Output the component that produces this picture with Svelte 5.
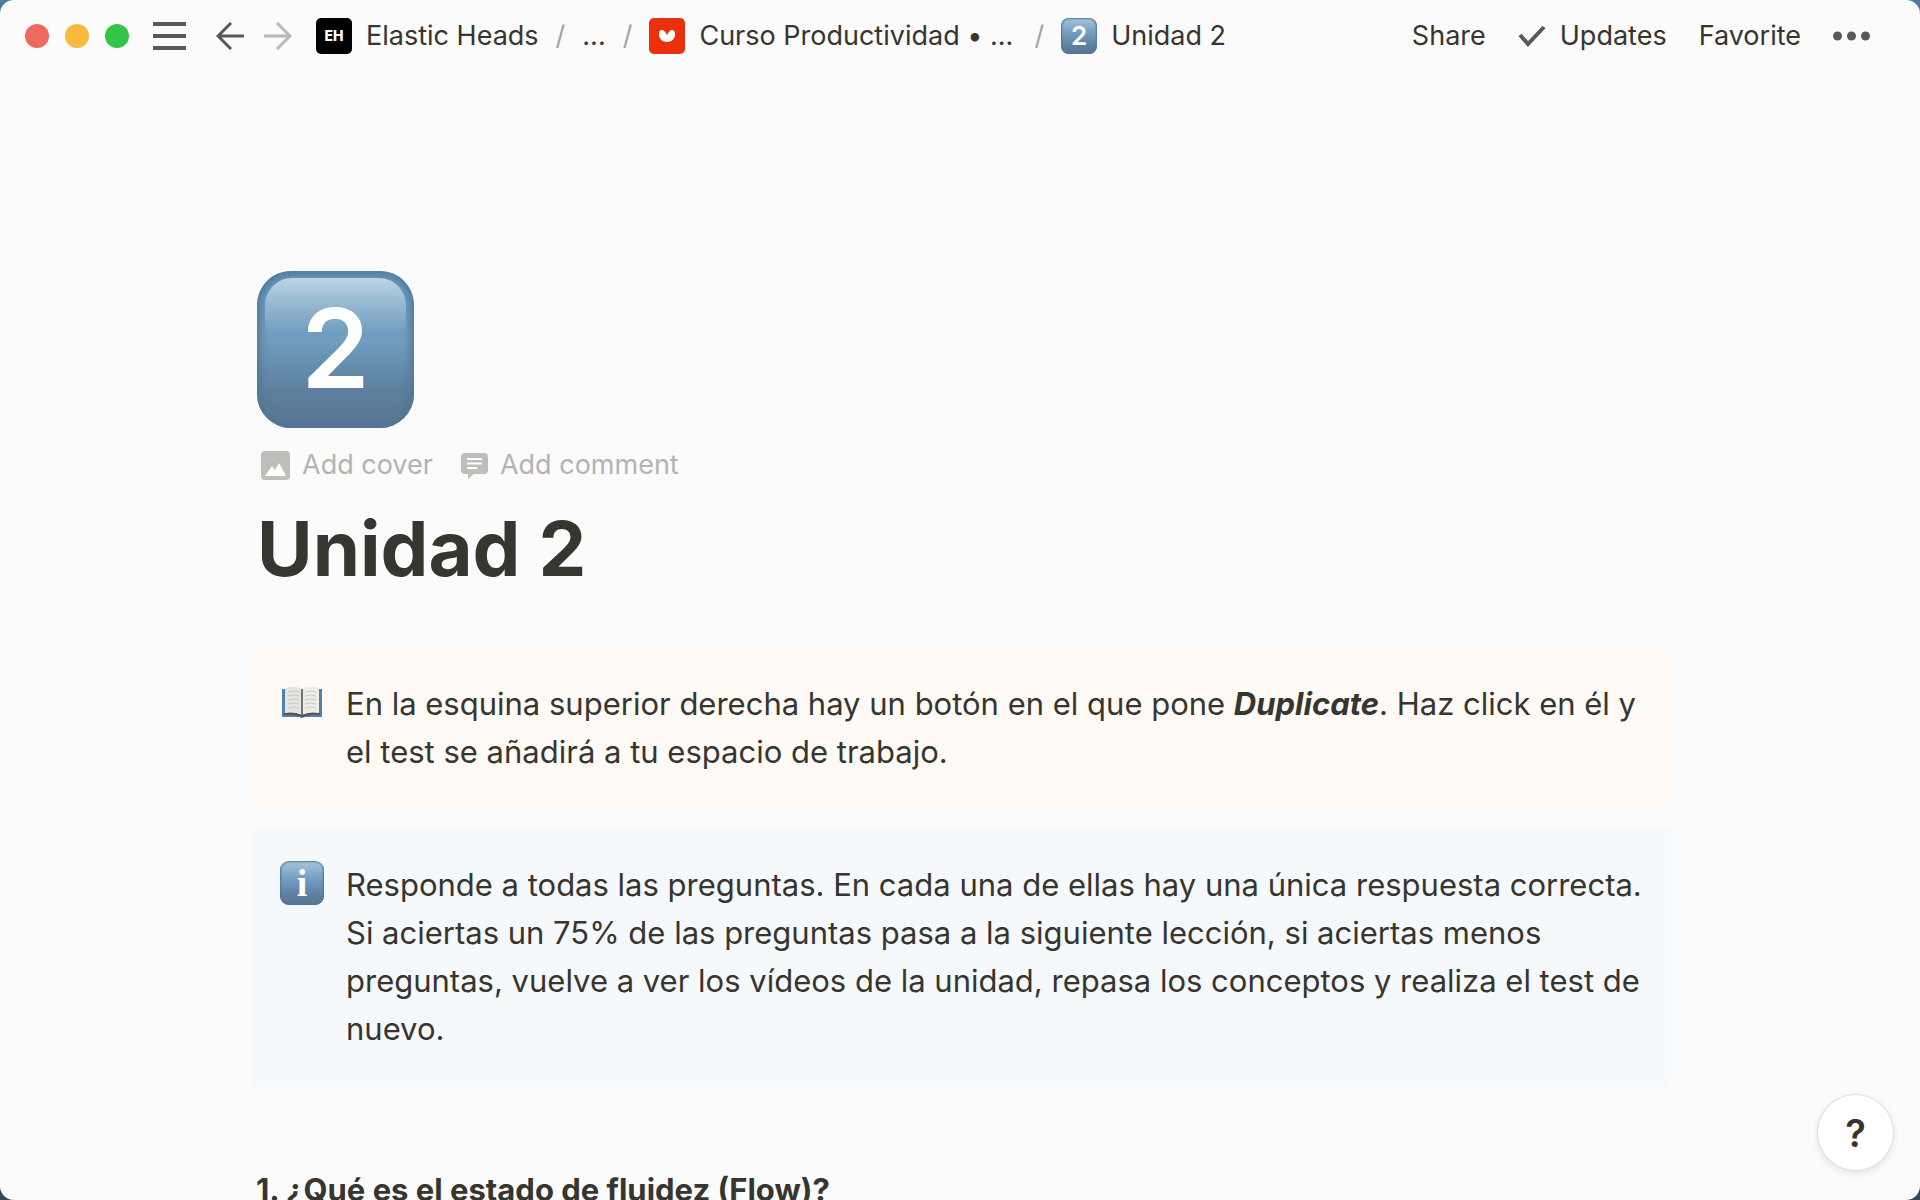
<script lang="ts">
  const windowButtons = [
    { name: 'Close', kind: 'close' },
    { name: 'Minimize', kind: 'minimize' },
    { name: 'Zoom', kind: 'zoom' },
  ];
</script>

{#snippet keycap(label: string, size: string)}
  <span class="keycap {size}"><span>{label}</span></span>
{/snippet}

<div class="window">
  <header>
    <div class="lights">
      {#each windowButtons as b}
        <button class="light {b.kind}" aria-label={b.name}></button>
      {/each}
    </div>
    <button class="menu" aria-label="Open sidebar">
      <svg width="33" height="28" viewBox="0 0 33 28"><path d="M0 2h33M0 14h33M0 26h33" /></svg>
    </button>
    <div class="history">
      <button aria-label="Back">
        <svg width="28" height="28" viewBox="0 0 28 28"><path d="M28 14H2M15 1 2 14l13 13" /></svg>
      </button>
      <button class="disabled" aria-label="Forward" disabled>
        <svg width="28" height="28" viewBox="0 0 28 28"><path d="M0 14h26M13 1l13 13-13 13" /></svg>
      </button>
    </div>

    <nav aria-label="Breadcrumb">
      <a href="#workspace"><span class="logo">EH</span>Elastic Heads</a>
      <span class="slash">/</span>
      <a href="#more">...</a>
      <span class="slash">/</span>
      <a class="course" href="#curso">
        <span class="logo red">
          <svg width="16" height="14" viewBox="0 0 16 14"><path d="M0 5.500C0 2 1.500 1 3 1c2 0 3.500 2 5 5 1.500-3 3-5 5-5 1.500 0 3 1 3 4.500C16 10 12.500 13 8 13S0 10 0 5.500z" /></svg>
        </span>
        Curso Productividad • ...
      </a>
      <span class="slash">/</span>
      <a href="#unidad">{@render keycap('2', 'small')}Unidad 2</a>
    </nav>

    <div class="actions">
      <button>Share</button>
      <button class="updates">
        <svg width="28" height="22" viewBox="0 0 28 22"><path d="M2 10l8 9L26 2" /></svg>
        Updates
      </button>
      <button>Favorite</button>
      <button class="dots" aria-label="More">
        <svg width="37" height="10" viewBox="0 0 37 10">
          <circle cx="4.500" cy="5" r="4.500" /><circle cx="18.500" cy="5" r="4.500" /><circle cx="32.500" cy="5" r="4.500" />
        </svg>
      </button>
    </div>
  </header>

  <main>
    <div class="head">
      {@render keycap('2', 'large')}
      <div class="controls">
        <button>
          <svg width="29" height="29" viewBox="0 0 29 29">
            <rect width="29" height="29" rx="4" />
            <path class="cut" d="M4 25l7-10 3 4 4-7 7 13z" />
          </svg>
          Add cover
        </button>
        <button>
          <svg width="27" height="27" viewBox="0 0 27 27">
            <path d="M4 1h19a4 4 0 0 1 4 4v13a4 4 0 0 1-4 4H13l-6 5v-5H4a4 4 0 0 1-4-4V5a4 4 0 0 1 4-4z" />
            <path class="lines" d="M6 7h15M6 11.500h15M6 16h10" />
          </svg>
          Add comment
        </button>
      </div>
      <h1>Unidad 2</h1>
    </div>

    <aside class="callout orange">
      <span class="icon">
        <svg width="40" height="32" viewBox="0 0 40 32">
          <path d="M0 3h3v25h14l3 1 3-1h14V3h3v28H23l-3 1-3-1H0z" fill="#4b84b3" />
          <path d="M2 27q10-2 18 2 8-4 18-2v2q-10-1-18 2-8-3-18-2z" fill="#555" />
          <path d="M3 2Q13-1 20 3v25Q12 25 3 27z" fill="#e5e4e1" />
          <path d="M37 2Q27-1 20 3v25q8-3 17-1z" fill="#eeedea" />
          <path d="M6 6q6-2 11 0M6 10q6-2 11 0M6 14q6-2 11 0M6 18q6-2 11 0M6 22q6-2 11 0M23 6q5-2 11 0M23 10q5-2 11 0M23 14q5-2 11 0M23 18q5-2 11 0M23 22q5-2 11 0" stroke="#c8c7c4" fill="none" />
          <path d="M20 3v26" stroke="#77736e" stroke-width="2" />
        </svg>
      </span>
      <p>
        En la esquina superior derecha hay un botón en el que pone <strong><em>Duplicate</em></strong>. Haz click
        en él y el test se añadirá a tu espacio de trabajo.
      </p>
    </aside>

    <aside class="callout blue">
      <span class="icon">{@render keycap('i', 'info')}</span>
      <p>
        Responde a todas las preguntas. En cada una de ellas hay una única respuesta correcta. Si aciertas un
        75% de las preguntas pasa a la siguiente lección, si aciertas menos preguntas, vuelve a ver los vídeos
        de la unidad, repasa los conceptos y realiza el test de nuevo.
      </p>
    </aside>

    <h2>1. ¿Qué es el estado de fluidez (Flow)?</h2>
  </main>

  <button class="help" aria-label="Help">?</button>
</div>

<style>
  :global(body) {
    background: linear-gradient(#4f7a9e, #33475a);
  }
  .window {
    position: relative;
    height: 100vh;
    overflow: hidden;
    box-sizing: border-box;
    border-radius: 14px;
    background: #fbfbfb;
    color: #37352f;
    font-family: Inter, "Liberation Sans", sans-serif;
    font-size: 27px;
  }
  button {
    padding: 0;
    border: 0;
    background: none;
    color: inherit;
    font: inherit;
    display: flex;
    align-items: center;
  }
  svg { display: block; flex-shrink: 0; }

  header {
    display: flex;
    align-items: center;
    height: 72px;
    padding: 0 50px 0 25px;
    line-height: 36px;
    white-space: nowrap;
  }
  header path { fill: none; stroke: #5b5955; stroke-width: 3; }
  .lights { display: flex; gap: 16px; }
  .light { width: 24px; height: 24px; border-radius: 50%; }
  .close { background: #f0695f; }
  .minimize { background: #f6ba3d; }
  .zoom { background: #33c548; }
  .menu { margin-left: 24px; }
  .menu path { stroke-width: 4; }
  .history { display: flex; gap: 20px; margin: 0 24px 0 30px; }
  .disabled { opacity: 0.4; }

  nav { display: flex; align-items: center; gap: 17px; }
  nav a {
    display: flex;
    align-items: center;
    gap: 14px;
    color: inherit;
    text-decoration: none;
  }
  .course { padding-right: 4px; }
  .slash { color: #a5a4a0; }
  .logo {
    display: flex;
    align-items: center;
    justify-content: center;
    width: 36px;
    height: 36px;
    border-radius: 5px;
    background: #000;
    color: #fff;
    font-size: 14px;
    font-weight: 800;
  }
  .logo.red { background: #eb300d; }
  .logo.red path { fill: #fff; stroke: none; }

  .actions { display: flex; align-items: center; gap: 32px; margin-left: auto; }
  .updates { gap: 14px; }
  .updates path { stroke-width: 4; }
  .dots circle { fill: #5b5955; }

  .keycap {
    display: flex;
    align-items: center;
    justify-content: center;
    box-sizing: border-box;
    flex-shrink: 0;
    background: linear-gradient(#a9c6da 0%, #709dc0 42%, #5c7e9c 80%, #587793 100%);
    color: #fff;
    font-weight: 600;
  }
  .small {
    width: 36px;
    height: 36px;
    border-radius: 8px;
    box-shadow: inset 0 0 2px 1px #4c7698;
    font-size: 26px;
  }
  .info {
    width: 44px;
    height: 44px;
    border-radius: 9px;
    box-shadow: inset 0 0 2px 1px #4c7698;
    font-family: "Liberation Serif", serif;
    font-size: 38px;
    font-weight: 700;
  }
  .large {
    position: relative;
    width: 157px;
    height: 157px;
    padding-bottom: 3px;
    border-radius: 34px;
    background: linear-gradient(#6797bc 0%, #709dc0 44%, #5c7e9c 78%, #587793 100%);
    box-shadow: inset 0 0 8px 3px #4f7594;
    font-size: 110px;
  }
  /* glossy highlight along the top edge */
  .large::before {
    content: "";
    position: absolute;
    top: 7px;
    left: 8px;
    right: 8px;
    height: 56px;
    border-radius: 27px 27px 0 0;
    background: linear-gradient(#bdd4e4, #bdd4e400);
  }
  .large span { position: relative; }

  main { padding: 199px 249px 0 252px; }
  .head { padding-left: 5px; }
  .controls {
    display: flex;
    gap: 28px;
    margin-top: 19px;
    padding-left: 4px;
    line-height: 36px;
    color: #b4b3b0;
  }
  .controls button { gap: 12px; }
  .controls svg { fill: #bfbebb; }
  .controls .cut { fill: #fff; }
  .controls .lines { stroke: #fff; stroke-width: 2; }
  h1 {
    margin: 16px 0 49px;
    font-size: 76px;
    line-height: 98px;
    font-weight: 700;
  }

  .callout {
    display: flex;
    gap: 22px;
    margin-bottom: 17px;
    padding: 34px 20px 34px 28px;
    border-radius: 5px;
    font-size: 31px;
    line-height: 48px;
  }
  .callout.orange { background: #fffaf5; }
  .callout.blue { background: #f5f9fc; }
  .callout p { margin: 0; }
  .icon {
    display: flex;
    align-items: center;
    justify-content: center;
    flex-shrink: 0;
    width: 44px;
    height: 44px;
  }
  h2 {
    margin: 79px 0 0;
    padding-left: 4px;
    font-size: 31px;
    line-height: 48px;
    font-weight: 700;
  }

  .help {
    position: absolute;
    right: 27px;
    bottom: 30px;
    justify-content: center;
    width: 75px;
    height: 75px;
    border-radius: 50%;
    background: #fff;
    box-shadow: 0 0 0 1px #dededc, 0 3px 8px #0000001c;
    font-size: 38px;
    font-weight: 600;
  }
</style>
